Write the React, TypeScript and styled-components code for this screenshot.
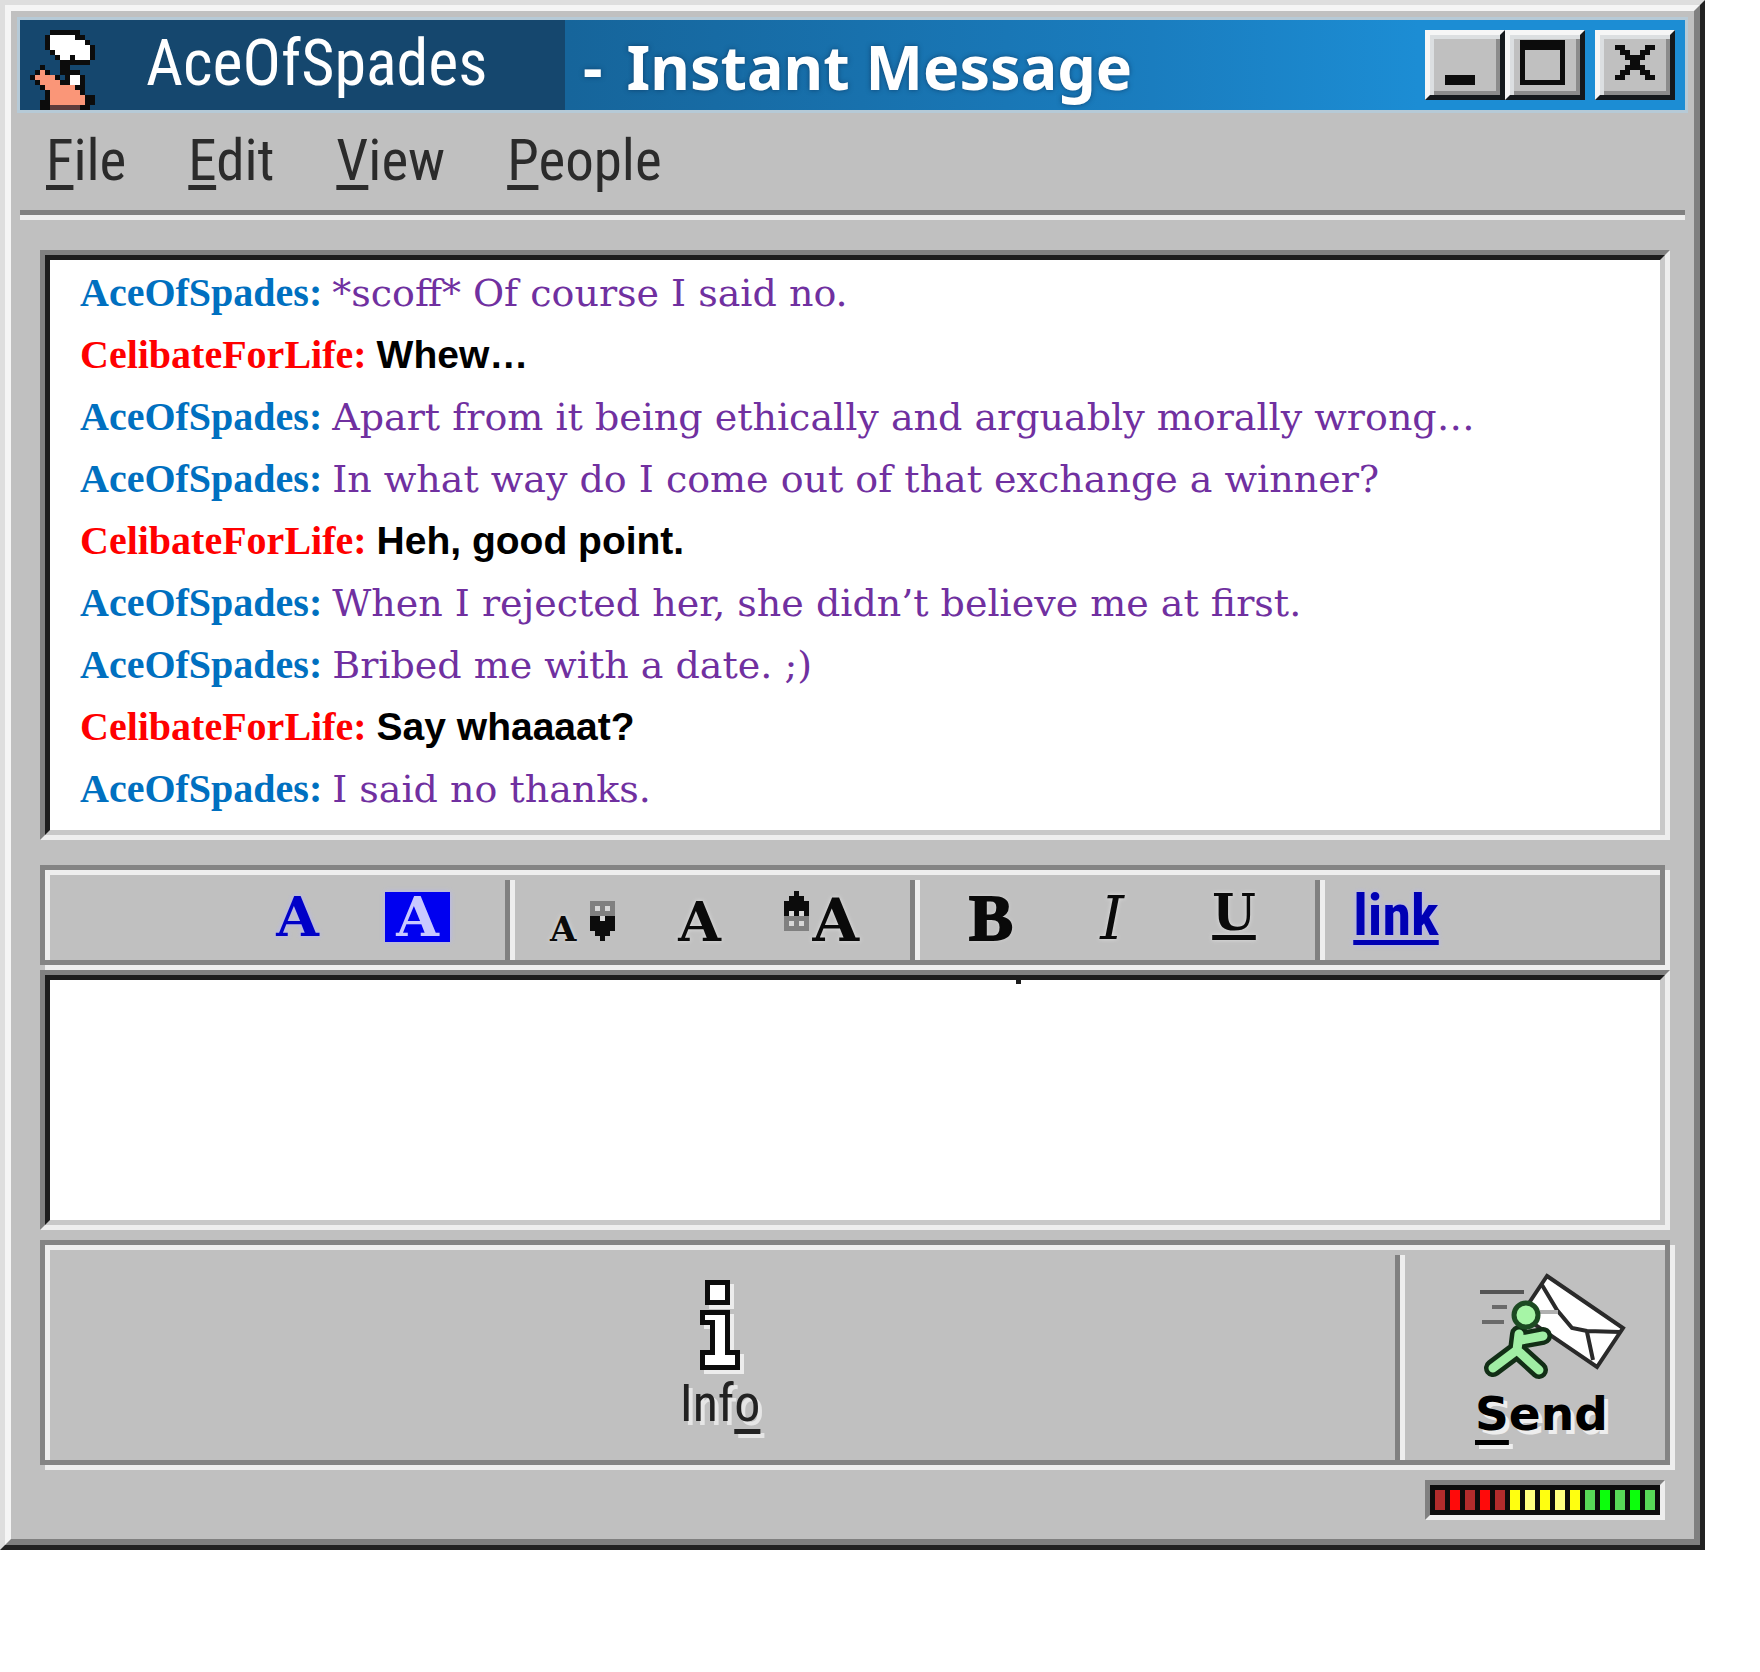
import React from "react";
import styled, { createGlobalStyle, css } from "styled-components";

const GlobalStyle = createGlobalStyle`
  * { box-sizing: border-box; }
  body { margin: 0; background: #ffffff; font-family: "Liberation Sans", Arial, sans-serif; }
  button { font: inherit; color: inherit; background: none; border: 0; padding: 0; margin: 0; cursor: pointer; }
  svg { display: block; flex: none; }
`;

const gray = "#c0c0c0";
const dark = "#808080";
const light = "#eeeeee";
const ink = "#1c1c1c";
const uiFont = `"Roboto Condensed", "DejaVu Sans Condensed", sans-serif`;
const slabFont = `"DejaVu Serif", "Liberation Serif", serif`;

/* ---------- bevels ---------- */

const Outer = styled.div`
  margin-right: 55px;
  border: 5px solid;
  border-color: #dedede #222222 #222222 #dedede;
`;

const Inner = styled.div`
  display: flex;
  flex-direction: column;
  border: 6px solid;
  border-color: #f5f5f5 ${dark} ${dark} #f5f5f5;
  background: ${gray};
  padding: 9px 0 19px;
`;

const sunken = css`
  border: 5px solid;
  border-color: ${dark} ${light} ${light} ${dark};
`;

const SunkenInner = styled.div`
  position: relative;
  border: 5px solid;
  border-color: ${ink} #c8c8c8 #c8c8c8 ${ink};
  background: #ffffff;
`;

const etched = css`
  border: 5px solid #848484;
  box-shadow: inset 5px 5px 0 ${light}, 5px 5px 0 ${light};
`;

const Divider = styled.div`
  flex: none;
  width: 10px;
  margin-top: 10px;
  border-left: 5px solid ${dark};
  border-right: 5px solid ${light};
`;

/* ---------- title bar ---------- */

const TitleBar = styled.header`
  display: flex;
  height: 90px;
  margin: 0 9px;
  background: linear-gradient(90deg, #155a8c 0%, #16659b 33%, #1a7dbf 68%, #1c8dd4 84%, #1c8dd4 100%);
  box-shadow: 0 0 0 3px #b6cad7;
  color: #ffffff;
`;

const NameBlock = styled.div`
  flex: none;
  display: flex;
  align-items: flex-end;
  gap: 46px;
  width: 545px;
  padding-left: 10px;
  background: #15476e;
`;

const BuddyName = styled.span`
  font: 64px/82px ${uiFont};
  padding-bottom: 5px;
`;

const Title = styled.h1`
  flex: 1;
  display: flex;
  align-items: center;
  gap: 24px;
  margin: 0;
  padding: 3px 0 0 18px;
  font: bold 61px/90px "Noto Sans", "Open Sans", sans-serif;
  white-space: nowrap;
  text-shadow: 0 0 5px rgba(10, 50, 90, 0.7);
`;

const Controls = styled.div`
  display: flex;
  align-items: center;
  padding-right: 10px;
`;

const ControlButton = styled.button<{ $apart?: boolean }>`
  width: 80px;
  height: 70px;
  margin-left: ${(p) => (p.$apart ? 10 : 0)}px;
  border: 5px solid;
  border-color: #f6f6f6 #15191c #15191c #f6f6f6;
  background: ${gray};
  box-shadow: inset 4px 4px 0 #dcdfe1, inset -4px -4px 0 #8c8c8c;
`;

/* ---------- menu ---------- */

const MenuBar = styled.nav`
  display: flex;
  align-items: center;
  gap: 62px;
  height: 110px;
  margin: 0 9px;
  padding-left: 26px;
  border-bottom: 5px solid ${light};
  box-shadow: inset 0 -5px 0 ${dark};
`;

const MenuItem = styled.button`
  font: 57px/100px ${uiFont};
  color: #2b2b2b;
  padding-bottom: 3px;
`;

const Key = styled.span<{ $drop?: number }>`
  text-decoration: underline;
  text-decoration-thickness: 5px;
  text-decoration-skip-ink: none;
  text-underline-offset: ${(p) => p.$drop ?? 5}px;
`;

/* ---------- conversation ---------- */

const Body = styled.main`
  display: flex;
  flex-direction: column;
  padding: 30px 24px 0 29px;
`;

const Transcript = styled.section`
  ${sunken}
`;

const Messages = styled(SunkenInner)`
  padding: 2px 30px 10px;
`;

const Message = styled.p`
  margin: 0;
  height: 62px;
  line-height: 62px;
  font-size: 40px;
  font-family: "Liberation Serif", "Times New Roman", serif;
  white-space: nowrap;
`;

const Sender = styled.b<{ $me?: boolean }>`
  color: ${(p) => (p.$me ? "#ff0000" : "#0070c0")};
`;

const Words = styled.span<{ $me?: boolean }>`
  ${(p) =>
    p.$me
      ? css`
          font: bold 39px/60px "Liberation Sans", Arial, sans-serif;
          color: #000000;
        `
      : css`
          font: 38px/60px ${slabFont};
          color: #7030a0;
        `}
`;

/* ---------- format toolbar ---------- */

const Toolbar = styled.div`
  ${etched}
  display: flex;
  height: 100px;
  margin: 25px 5px 5px 0;
`;

const Group = styled.div<{ $width: number; $left: number; $gap: number; $top: number; $baseline?: boolean }>`
  flex: none;
  display: flex;
  align-items: ${(p) => (p.$baseline ? "baseline" : "flex-start")};
  width: ${(p) => p.$width}px;
  gap: ${(p) => p.$gap}px;
  padding: ${(p) => p.$top}px 0 0 ${(p) => p.$left}px;
`;

const Tool = styled.button<{ $size: number; $width: number; $underlined?: boolean }>`
  display: flex;
  align-items: baseline;
  justify-content: center;
  width: ${(p) => p.$width}px;
  font: bold ${(p) => p.$size}px/${(p) => (p.$underlined ? 70 : 80)}px ${slabFont};
  color: #0a0a0a;
  text-shadow: 0 0 4px #e0e0e0;
`;

const BlueTool = styled(Tool)`
  color: #0000c8;
  text-shadow: 0 0 5px #b4b4ff;
`;

const HighlightTool = styled(Tool)`
  height: 50px;
  margin-top: 15px;
  line-height: 50px;
  background: #0000f0;
  color: #c8c8ff;
  text-shadow: none;
  box-shadow: 0 0 5px #b4b4ff;
`;

const BoldTool = styled(Tool)`
  font-family: "Liberation Serif", serif;
  -webkit-text-stroke: 2px #0a0a0a;
`;

const ItalicTool = styled(Tool)`
  font-weight: 400;
  font-style: italic;
`;

const LinkTool = styled(BlueTool)`
  font-family: ${uiFont};
  color: #0000b4;
`;

const SizePair = styled(Tool)`
  justify-content: space-between;
`;

/* ---------- editor ---------- */

const Editor = styled.div`
  ${sunken}
`;

const EditorInner = styled(SunkenInner)`
  &::before {
    content: "";
    position: absolute;
    left: 60%;
    top: 0;
    width: 5px;
    height: 4px;
    background: ${ink};
  }
`;

const TextArea = styled.textarea`
  display: block;
  width: 100%;
  height: 240px;
  padding: 10px 30px;
  border: 0;
  outline: 0;
  resize: none;
  background: transparent;
  font: bold 39px/60px "Liberation Sans", Arial, sans-serif;
`;

/* ---------- actions ---------- */

const Actions = styled.div`
  ${etched}
  display: flex;
  height: 225px;
  margin-top: 10px;
`;

const InfoArea = styled.div`
  flex: 1;
  display: flex;
  justify-content: center;
  padding-top: 35px;
`;

const SendArea = styled.div`
  flex: none;
  width: 260px;
  padding: 25px 0 0 70px;
`;

const ActionButton = styled.button`
  display: flex;
  flex-direction: column;
  gap: 9px;
  text-align: left;
`;

const InfoButton = styled(ActionButton)`
  align-items: center;
  align-self: flex-start;
`;

const InfoLabel = styled.span`
  font: 52px/50px ${uiFont};
  color: #222222;
  text-shadow: 4px 4px 0 #e6e6e6;
`;

const SendLabel = styled.span`
  font: bold 47px/50px "DejaVu Sans", sans-serif;
  color: #000000;
  text-shadow: 4px 4px 0 #eeeeee;
`;

const StatusBar = styled.footer`
  display: flex;
  justify-content: flex-end;
  padding: 15px 29px 0 0;
`;

const Meter = styled.div`
  ${sunken}
`;

const MeterTrack = styled.div`
  display: flex;
  gap: 5px;
  padding: 5px;
  background: #0c0c0c;
`;

const Led = styled.span<{ $color: string }>`
  width: 10px;
  height: 20px;
  background: ${(p) => p.$color};
`;

/* ---------- pixel drawings ---------- */

const palette: Record<string, string> = {
  k: "#0c0c0c",
  w: "#ffffff",
  g: "#808080",
  l: "#d8d8d8",
  o: "#fa9678",
  d: "#5c3c3c",
};

const Shadowed = styled.svg<{ $shadow?: boolean }>`
  filter: ${(p) => (p.$shadow ? "drop-shadow(4px 4px 0 #ececec)" : "none")};
`;

function Pixels({ rows, shadow }: { rows: string[]; shadow?: boolean }) {
  const w = rows[0].length;
  return (
    <Shadowed
      $shadow={shadow}
      width={w * 5}
      height={rows.length * 5}
      viewBox={`0 0 ${w} ${rows.length}`}
      shapeRendering="crispEdges"
      aria-hidden="true"
    >
      {rows.flatMap((row, y) =>
        row.split("").map((c, x) =>
          palette[c] ? <rect key={`${x}-${y}`} x={x} y={y} width="1" height="1" fill={palette[c]} /> : null
        )
      )}
    </Shadowed>
  );
}

const buddy = [
  "....kkkkkk....",
  "...kwwwwwkk...",
  "...kwwwwwwwk..",
  "...kwwwwwwwwk.",
  "....kwwwwwwwk.",
  ".....kwwkwwwk.",
  "......kkkkkk..",
  "..k...kk......",
  ".kok..kkkk....",
  "kooook.kwwk...",
  ".kooookkwwk...",
  "..kooooookk...",
  "...kooooook...",
  "...koooooookk.",
  "..kkoooooookk.",
  "..kkddddddkk..",
];

const arrowDown = ["ggggg", "glglg", "ggggg", "kklkk", "kkkkk", "kkkkk", ".kkk.", "..k.."];
const arrowUp = ["..k..", ".kkk.", "kkkkk", "kkkkk", "klklk", "ggggg", "glglg", "ggggg", ".....", "....."];

const infoSign = [
  ".kkkkk..",
  ".kwwwk..",
  ".kwwwk..",
  ".kwwwk..",
  ".kkkkk..",
  "........",
  "kkkkkk..",
  "kwwwwk..",
  "kkkwwk..",
  "..kwwk..",
  "..kwwk..",
  "..kwwk..",
  "..kwwk..",
  "..kwwk..",
  "kkkwwkkk",
  "kwwwwwwk",
  "kwwwwwwk",
  "kkkkkkkk",
];

const minimize = [
  "..............", "..............", "..............", "..............",
  "..............", "..............", "..............", "..............",
  "...kkkkkk.....", "...kkkkkk.....", "..............", "..............",
];
const maximize = [
  "..............",
  "..kkkkkkkkk...",
  "..kkkkkkkkk...",
  "..k.......k...",
  "..k.......k...",
  "..k.......k...",
  "..k.......k...",
  "..k.......k...",
  "..k.......k...",
  "..kkkkkkkkk...",
  "..............",
  "..............",
];
const close = [
  "..............",
  "..............",
  "...kk....kk...",
  "....kk..kk....",
  ".....kkkk.....",
  "......kk......",
  ".....kkkk.....",
  "....kk..kk....",
  "...kk....kk...",
  "..............",
  "..............",
  "..............",
];

function RunningMan() {
  const limbs = "M44 64 L42 80 L18 98 M42 80 L64 100 M46 70 L68 66";
  return (
    <svg width="155" height="110" viewBox="0 0 155 110" aria-hidden="true" fill="none">
      <path d="M5 22H49" stroke="#555555" strokeWidth="4" />
      <path d="M17 37H32M7 52H29" stroke="#6a6a6a" strokeWidth="4" />
      <path d="M72 6L148 58L122 97L46 45Z" fill="#ffffff" stroke="#2a2a2a" strokeWidth="4" />
      <path d="M67 15L82 40L97 58L112 61L145 62M112 62L118 90" stroke="#2a2a2a" strokeWidth="4" />
      <path d="M65 42H83" stroke="#b0b0b0" strokeWidth="4" />
      <path d={limbs} stroke="#122e16" strokeWidth="18" strokeLinejoin="round" strokeLinecap="round" />
      <circle cx="51" cy="45" r="12" fill="#a6f5a6" stroke="#1c4a22" strokeWidth="5" />
      <path d={limbs} stroke="#a0eea4" strokeWidth="9" strokeLinejoin="round" strokeLinecap="round" />
    </svg>
  );
}

/* ---------- data ---------- */

const ACE = "AceOfSpades";
const ME = "CelibateForLife";

const messages = [
  { from: ACE, text: "*scoff* Of course I said no." },
  { from: ME, text: "Whew…" },
  { from: ACE, text: "Apart from it being ethically and arguably morally wrong…" },
  { from: ACE, text: "In what way do I come out of that exchange a winner?" },
  { from: ME, text: "Heh, good point." },
  { from: ACE, text: "When I rejected her, she didn’t believe me at first." },
  { from: ACE, text: "Bribed me with a date. ;)" },
  { from: ME, text: "Say whaaaat?" },
  { from: ACE, text: "I said no thanks." },
];

const leds = [
  "#b02c2c", "#ff0a0a", "#b02c2c", "#ff0a0a", "#b02c2c",
  "#ffff10", "#ffff80", "#ffff10", "#ffff80", "#ffff10",
  "#58d858", "#0cff0c", "#58d858", "#0cff0c", "#58d858",
];

export default function App() {
  return (
    <>
      <GlobalStyle />
      <Outer>
        <Inner>
          <TitleBar>
            <NameBlock>
              <Pixels rows={buddy} />
              <BuddyName>AceOfSpades</BuddyName>
            </NameBlock>
            <Title>
              <span>-</span>
              <span>Instant Message</span>
            </Title>
            <Controls>
              <ControlButton aria-label="Minimize"><Pixels rows={minimize} /></ControlButton>
              <ControlButton aria-label="Maximize"><Pixels rows={maximize} /></ControlButton>
              <ControlButton aria-label="Close" $apart><Pixels rows={close} /></ControlButton>
            </Controls>
          </TitleBar>

          <MenuBar>
            {["File", "Edit", "View", "People"].map((m) => (
              <MenuItem key={m}>
                <Key>{m[0]}</Key>
                {m.slice(1)}
              </MenuItem>
            ))}
          </MenuBar>

          <Body>
            <Transcript>
              <Messages>
                {messages.map((m, i) => (
                  <Message key={i}>
                    <Sender $me={m.from === ME}>{m.from}:</Sender>{" "}
                    <Words $me={m.from === ME}>{m.text}</Words>
                  </Message>
                ))}
              </Messages>
            </Transcript>

            <Toolbar role="toolbar">
              <Group $width={460} $left={230} $gap={65} $top={7}>
                <BlueTool $size={55} $width={45} aria-label="Text color">A</BlueTool>
                <HighlightTool $size={55} $width={65} aria-label="Background color">A</HighlightTool>
              </Group>
              <Divider />
              <Group $width={395} $left={35} $gap={62} $top={10} $baseline>
                <SizePair $size={34} $width={65} aria-label="Smaller text">
                  A<Pixels rows={arrowDown} />
                </SizePair>
                <Tool $size={55} $width={45} aria-label="Normal text">A</Tool>
                <SizePair $size={60} $width={75} aria-label="Larger text">
                  <Pixels rows={arrowUp} />A
                </SizePair>
              </Group>
              <Divider />
              <Group $width={395} $left={49} $gap={69} $top={8}>
                <BoldTool $size={66} $width={44} aria-label="Bold">B</BoldTool>
                <ItalicTool $size={60} $width={60} aria-label="Italic">I</ItalicTool>
                <Tool $size={50} $width={46} $underlined aria-label="Underline"><Key>U</Key></Tool>
              </Group>
              <Divider />
              <Group $width={150} $left={27} $gap={0} $top={10}>
                <LinkTool $size={58} $width={88} $underlined><Key>link</Key></LinkTool>
              </Group>
            </Toolbar>

            <Editor>
              <EditorInner>
                <TextArea aria-label="Message" />
              </EditorInner>
            </Editor>

            <Actions>
              <InfoArea>
                <InfoButton>
                  <Pixels rows={infoSign} shadow />
                  <InfoLabel>Inf<Key $drop={8}>o</Key></InfoLabel>
                </InfoButton>
              </InfoArea>
              <Divider />
              <SendArea>
                <ActionButton>
                  <RunningMan />
                  <SendLabel><Key $drop={10}>S</Key>end</SendLabel>
                </ActionButton>
              </SendArea>
            </Actions>
          </Body>

          <StatusBar>
            <Meter role="meter" aria-label="Warning level" aria-valuenow={100}>
              <MeterTrack>
                {leds.map((c, i) => (
                  <Led key={i} $color={c} />
                ))}
              </MeterTrack>
            </Meter>
          </StatusBar>
        </Inner>
      </Outer>
    </>
  );
}
